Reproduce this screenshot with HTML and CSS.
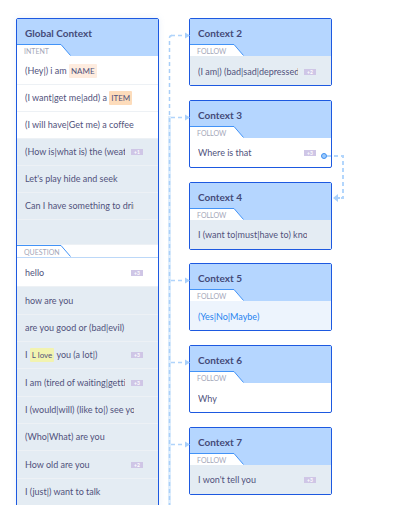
FILE: index.html
```html
<!DOCTYPE html>
<html lang="en">
<head>
<meta charset="utf-8">
<meta name="viewport" content="width=device-width, initial-scale=1">
<title>Context flow</title>
<link rel="stylesheet" href="styles.css">
</head>
<body>
<svg class="defs" aria-hidden="true">
  <symbol id="tab" viewBox="0 0 54 12"><path d="M0 .5H44L54 12H0z" fill="#fff"/><path d="M0 .5H44L53.5 11.5" fill="none" stroke="#4293f7" stroke-width="1"/></symbol>
  <symbol id="branch" viewBox="0 0 21 8"><path d="M2 4.500H17" fill="none" stroke="#b0d4fb" stroke-width="1.500" stroke-dasharray="4 3"/><path d="M16 1.500L21 4.500L16 7.500z" fill="#a9d0fb"/></symbol>
</svg>
<main class="canvas">
  <section class="card global">
    <header class="head">
      <h2 class="title">Global Context</h2>
      <div class="tab"><svg class="tab-shape" aria-hidden="true"><use href="#tab"/></svg><h3 class="label">Intent</h3></div>
    </header>
    <ul class="rows">
      <li class="row"><span class="text">(Hey|) i am <mark class="tag peach">NAME</mark></span></li>
      <li class="row"><span class="text">(I want|get me|add) a <mark class="tag orange">ITEM</mark></span></li>
      <li class="row"><span class="text">(I will have|Get me) a coffee</span></li>
      <li class="row muted"><span class="text">(How is|what is) the (weat</span><span class="more">+1</span></li>
      <li class="row muted"><span class="text">Let's play hide and seek</span></li>
      <li class="row muted"><span class="text">Can I have something to drin</span></li>
      <li class="row muted empty"></li>
    </ul>
    <div class="divider">
      <div class="tab"><svg class="tab-shape" aria-hidden="true"><use href="#tab"/></svg><h3 class="label">Question</h3></div>
    </div>
    <ul class="rows">
      <li class="row"><span class="text">hello</span><span class="more">+3</span></li>
      <li class="row muted"><span class="text">how are you</span></li>
      <li class="row muted"><span class="text">are you good or (bad|evil)</span></li>
      <li class="row muted"><span class="text">I <mark class="tag yellow">L love</mark> you (a lot|)</span><span class="more">+3</span></li>
      <li class="row muted"><span class="text">I am (tired of waiting|getti</span><span class="more">+3</span></li>
      <li class="row muted"><span class="text">I (would|will) (like to|) see yo</span></li>
      <li class="row muted"><span class="text">(Who|What) are you</span></li>
      <li class="row muted"><span class="text">How old are you</span><span class="more">+2</span></li>
      <li class="row muted"><span class="text">I (just|) want to talk</span></li>
    </ul>
  </section>

  <div class="follow-ups">
    <svg class="trunk" aria-hidden="true">
      <path d="M4 1.500Q1.500 1.500 1.500 4" fill="none" stroke="#b0d4fb" stroke-width="1.500"/>
      <line x1="1.500" y1="7" x2="1.500" y2="100%" stroke="#a9cef8" stroke-width="1.500" stroke-dasharray="4 3"/>
      <line x1="1.500" y1="82" x2="1.500" y2="100%" stroke="#b0d4fb" stroke-opacity=".4" stroke-width="3"/>
    </svg>
    <section class="card">
      <svg class="branch" aria-hidden="true"><use href="#branch"/></svg>
      <header class="head">
        <h2 class="title">Context 2</h2>
        <div class="tab"><svg class="tab-shape" aria-hidden="true"><use href="#tab"/></svg><h3 class="label">Follow</h3></div>
      </header>
      <ul class="rows"><li class="row muted"><span class="text">(I am|) (bad|sad|depressed</span><span class="more">+2</span></li></ul>
    </section>
    <section class="card">
      <svg class="branch" aria-hidden="true"><use href="#branch"/></svg>
      <header class="head">
        <h2 class="title">Context 3</h2>
        <div class="tab"><svg class="tab-shape" aria-hidden="true"><use href="#tab"/></svg><h3 class="label">Follow</h3></div>
      </header>
      <ul class="rows"><li class="row"><span class="text">Where is that</span><span class="more">+3</span></li></ul>
      <svg class="jump" viewBox="0 0 26 54" aria-hidden="true">
        <path d="M7 6H23V48H18" fill="none" stroke="#b3d6fc" stroke-width="2" stroke-dasharray="4 3"/>
        <path d="M13 48L18 44V47H20V49H18V52z" fill="#a9d0fb"/>
        <circle cx="4" cy="6" r="2.500" fill="#9ccafc" stroke="#3f8ff0"/>
      </svg>
    </section>
    <section class="card">
      <header class="head">
        <h2 class="title">Context 4</h2>
        <div class="tab"><svg class="tab-shape" aria-hidden="true"><use href="#tab"/></svg><h3 class="label">Follow</h3></div>
      </header>
      <ul class="rows"><li class="row muted"><span class="text">I (want to|must|have to) kno</span></li></ul>
    </section>
    <section class="card">
      <svg class="branch" aria-hidden="true"><use href="#branch"/></svg>
      <header class="head">
        <h2 class="title">Context 5</h2>
        <div class="tab"><svg class="tab-shape" aria-hidden="true"><use href="#tab"/></svg><h3 class="label">Follow</h3></div>
      </header>
      <ul class="rows"><li class="row active"><span class="text">(Yes|No|Maybe)</span></li></ul>
    </section>
    <section class="card">
      <svg class="branch" aria-hidden="true"><use href="#branch"/></svg>
      <header class="head">
        <h2 class="title">Context 6</h2>
        <div class="tab"><svg class="tab-shape" aria-hidden="true"><use href="#tab"/></svg><h3 class="label">Follow</h3></div>
      </header>
      <ul class="rows"><li class="row"><span class="text">Why</span></li></ul>
    </section>
    <section class="card">
      <svg class="branch" aria-hidden="true"><use href="#branch"/></svg>
      <header class="head">
        <h2 class="title">Context 7</h2>
        <div class="tab"><svg class="tab-shape" aria-hidden="true"><use href="#tab"/></svg><h3 class="label">Follow</h3></div>
      </header>
      <ul class="rows"><li class="row muted"><span class="text">I won't tell you</span><span class="more">+3</span></li></ul>
    </section>
  </div>
</main>
</body>
</html>
```
FILE: styles.css
```css
* { box-sizing: border-box; }

body {
  margin: 0;
  background: #fff;
  color: #51527c;
  font: 9px/14px Lato, "Liberation Sans", sans-serif;
  font-variant-ligatures: none;
}

h2, h3, ul { margin: 0; padding: 0; }
ul { list-style: none; }

.defs { position: absolute; width: 0; height: 0; }

.canvas {
  display: grid;
  grid-template-columns: repeat(2, minmax(0, 1fr));
  align-items: start;
  gap: 30px;
  height: 100vh;
  padding: 18px 80px 0 16px;
  overflow: hidden;
}

.card {
  position: relative;
  border: 1px solid #1d59e0;
  border-radius: 2px;
  background: #fff;
}

.global { box-shadow: 0 0 6px rgba(120, 160, 220, 0.15); }

.follow-ups {
  position: relative;
  display: flex;
  flex-direction: column;
  justify-content: space-between;
  height: calc(100vh - 28px);
}

.head {
  display: flex;
  flex-direction: column;
  background: #b5d6ff;
}

.title {
  padding: 7px 8px 4px;
  color: #444a78;
  font-size: 10px;
  font-weight: 700;
  line-height: 14px;
}

.tab {
  display: grid;
  width: 54px;
  height: 12px;
}

.tab-shape, .label { grid-area: 1 / 1; }

.tab-shape { width: 54px; height: 12px; }

.label {
  z-index: 1;
  padding: 1px 7px 0;
  color: #a3a6b8;
  font-size: 7px;
  font-weight: 400;
  line-height: 12px;
  text-transform: uppercase;
}

.divider {
  border-bottom: 1px solid #bcd8f8;
}

.row {
  display: flex;
  align-items: center;
  gap: 6px;
  height: 27px;
  padding: 0 15px 0 8px;
  border-bottom: 1px solid #edf1f5;
}

.row:first-child { height: 29px; padding-top: 2px; }
.row.empty { height: 25px; }
.divider + .rows .row:nth-child(3n + 2) { height: 28px; }

.follow-ups .row { border-bottom: 0; }

.muted { background: #e4ecf3; }
.active { background: #edf4fd; color: #2683f0; }

.text {
  flex: 1;
  min-width: 0;
  margin-right: 9px;
  overflow: hidden;
  white-space: nowrap;
}

.text:not(:last-child) { margin-right: 0; }

.tag {
  padding: 2px;
  border-radius: 1px;
  color: inherit;
  font-size: 8px;
}

.peach { background: #feecdf; }
.orange { background: #fddcbb; }
.yellow { background: #f2f3b0; }

.more {
  flex: none;
  width: 12px;
  height: 6px;
  background: #cfc6e6;
  color: #fff;
  font-size: 5px;
  font-weight: 700;
  line-height: 6px;
  text-align: center;
}

.trunk {
  position: absolute;
  top: 16px;
  left: -21px;
  width: 4px;
  height: calc(100% - 6px);
}

.branch {
  position: absolute;
  top: 12px;
  left: -21px;
  width: 21px;
  height: 8px;
}

.jump {
  position: absolute;
  top: 49px;
  left: 130px;
  z-index: 1;
  width: 26px;
  height: 54px;
}
```
